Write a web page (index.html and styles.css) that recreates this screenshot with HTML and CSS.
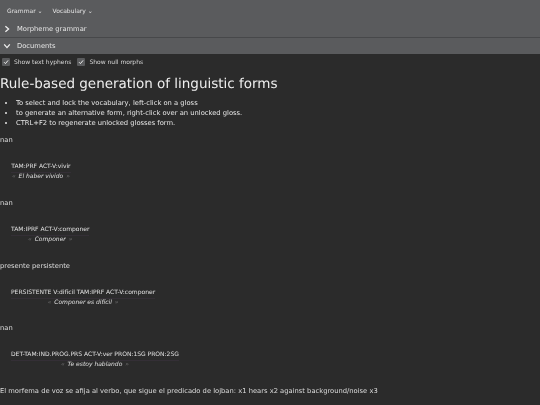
FILE: index.html
```html
<!DOCTYPE html>
<html lang="en">
<head>
    <meta charset="UTF-8">
    <title>Rule-based generation of linguistic forms</title>
    <link rel="stylesheet" href="styles.css">
</head>
<body>

<!-- Top menu -->
<div class="menubar">
    <span class="menu">Grammar <span class="caret">&#8964;</span></span>
    <span class="menu">Vocabulary <span class="caret">&#8964;</span></span>
</div>

<!-- Accordion headers -->
<div class="panel panel-first">
    <svg class="chevron" viewBox="0 0 10 10"><path d="M3 1.5 L7 5 L3 8.5" /></svg>
    <span class="panel-label">Morpheme grammar</span>
</div>
<div class="panel">
    <svg class="chevron" viewBox="0 0 10 10"><path d="M1.5 3 L5 7 L8.5 3" /></svg>
    <span class="panel-label">Documents</span>
</div>

<!-- Options -->
<div class="options">
    <label class="option">
        <span class="checkbox"><svg viewBox="0 0 10 10"><path d="M2.5 5.2 L4.3 7 L7.6 3" /></svg></span>
        Show text hyphens
    </label>
    <label class="option">
        <span class="checkbox"><svg viewBox="0 0 10 10"><path d="M2.5 5.2 L4.3 7 L7.6 3" /></svg></span>
        Show null morphs
    </label>
</div>

<h1 class="title">Rule-based generation of linguistic forms</h1>

<ul class="help">
    <li>To select and lock the vocabulary, left-click on a gloss</li>
    <li>to generate an alternative form, right-click over an unlocked gloss.</li>
    <li>CTRL+F2 to regenerate unlocked glosses form.</li>
</ul>

<p class="note">nan</p>
<div class="example">
    <div class="gloss">TAM:PRF ACT-V:vivir</div>
    <div class="phrase"><span class="quote">&laquo;</span> El haber vivido <span class="quote">&raquo;</span></div>
</div>

<p class="note">nan</p>
<div class="example">
    <div class="gloss">TAM:IPRF ACT-V:componer</div>
    <div class="phrase"><span class="quote">&laquo;</span> Componer <span class="quote">&raquo;</span></div>
</div>

<p class="note">presente persistente</p>
<div class="example">
    <div class="gloss">PERSISTENTE V:difícil TAM:IPRF ACT-V:componer</div>
    <div class="phrase"><span class="quote">&laquo;</span> Componer es difícil <span class="quote">&raquo;</span></div>
</div>

<p class="note">nan</p>
<div class="example">
    <div class="gloss">DET-TAM:IND.PROG.PRS ACT-V:ver PRON:1SG PRON:2SG</div>
    <div class="phrase"><span class="quote">&laquo;</span> Te estoy hablando <span class="quote">&raquo;</span></div>
</div>

<p class="note">El morfema de voz se afija al verbo, que sigue el predicado de lojban: x1 hears x2 against background/noise x3</p>

</body>
</html>
```

FILE: styles.css
```css
html, body {
    height: 100%;
    overflow: hidden;
}

body {
    margin: 0;
    background-color: #2b2b2b;
    color: #e6e6e6;
    font-family: "DejaVu Sans", sans-serif;
    font-size: 6.75px;
    text-rendering: geometricPrecision;
}

/* soft, grey text like the downscaled original */
.menu,
.panel-label,
.option,
.title,
.help,
.note,
.example {
    filter: blur(0.3px);
}

.menubar {
    display: flex;
    gap: 10px;
    box-sizing: border-box;
    height: 21px;
    padding: 1px 0 0 7px;
    align-items: center;
    background-color: #5a5b5d;
    font-size: 6px;
    color: #e4e4e4;
}

.caret {
    font-size: 6px;
}

.panel {
    display: flex;
    align-items: center;
    height: 15px;
    padding-bottom: 1px;
    background-color: #5a5b5d;
    border-top: 1px solid #47484a;
    font-size: 6.75px;
    color: #e4e4e4;
}

.panel-first {
    border-top: none;
}

.panel:last-of-type {
    border-bottom: 1px solid #47484a;
}

.chevron {
    width: 8px;
    height: 8px;
    margin: 0 6px 0 3px;
    fill: none;
    stroke: #f0f0f0;
    stroke-width: 1.6;
}

.options {
    display: flex;
    gap: 6px;
    height: 16px;
    padding: 0 2px;
    align-items: center;
}

.option {
    display: flex;
    align-items: center;
    gap: 4px;
    font-size: 6px;
    color: #d8d8d8;
}

.checkbox {
    display: block;
    width: 8px;
    height: 8px;
    background-color: #5a5b5d;
    border-radius: 1px;
}

.checkbox svg {
    display: block;
    fill: none;
    stroke: #f0f0f0;
    stroke-width: 1.2;
}

.title {
    margin: 6px 0 5px;
    font-size: 13.5px;
    line-height: 17px;
    font-weight: normal;
    color: #eeeeee;
}

.help {
    margin: 0;
    padding-left: 16px;
    line-height: 10px;
}

.note {
    margin: 7px 0 0;
    line-height: 10px;
    color: #dddddd;
}

.example {
    display: table;
    margin: 17px 0 15.8px 11px;
    text-align: center;
    font-size: 6px;
    line-height: 10px;
}

.gloss {
    color: #e0e0e0;
    box-shadow: 0 1px 0 #342f36;
}

.phrase {
    font-style: italic;
    color: #e0e0e0;
}

.quote {
    margin: 0 1px;
    color: #777777;
}
```
